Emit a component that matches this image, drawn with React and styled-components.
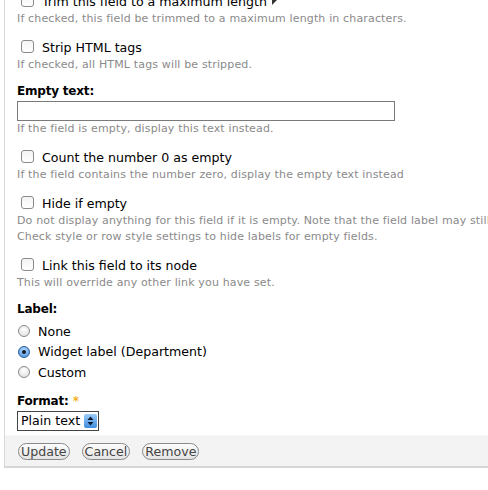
import styled, { createGlobalStyle, css } from "styled-components";

const GlobalStyle = createGlobalStyle`
  html, body {
    margin: 0;
    padding: 0;
    background: #fff;
    overflow: hidden;
  }
  body {
    font-family: "DejaVu Sans", Verdana, sans-serif;
    color: #000;
  }
`;

const Page = styled.div`
  width: 488px;
  height: 490px;
  overflow: hidden;
`;

const Panel = styled.div`
  margin: -9px 0 0 4px;
  border-left: 1px solid #d8d8d8;
  border-bottom: 2px solid #d4d6d6;
`;

const Body = styled.div`
  padding: 0 0 0 12px;
`;

const FormItem = styled.div`
  margin-bottom: 10px;
`;

const CheckRow = styled.label`
  display: flex;
  align-items: center;
  height: 20px;
  font-size: 12.6px;
  white-space: nowrap;
  padding-left: 4px;
`;

const Box = styled.span`
  width: 11px;
  height: 11px;
  border: 1px solid #8a8a8a;
  border-radius: 3px;
  background: linear-gradient(#f4f4f4, #ffffff);
  margin: -1px 8px 0 0;
  flex: none;
`;

const Arrow = styled.span`
  display: inline-block;
  width: 0;
  height: 0;
  border-top: 5px solid #333;
  border-right: 5px solid transparent;
  margin: 2px 0 0 5px;
`;

const Desc = styled.div`
  font-size: 11px;
  letter-spacing: 0.15px;
  line-height: 16px;
  color: #8a8a8a;
  white-space: nowrap;
`;

const FieldLabel = styled.div`
  font-size: 12px;
  letter-spacing: -0.2px;
  font-weight: bold;
  line-height: 16px;
  margin-top: ${(p) => p.top || 0}px;
  margin-bottom: ${(p) => p.gap || 0}px;
`;

const Required = styled.span`
  color: #f0b020;
  margin-left: 4px;
`;

const TextInput = styled.div`
  width: 376px;
  height: 18px;
  border: 1px solid #7a7a7a;
  background: #fff;
`;

const RadioRow = styled.label`
  display: flex;
  align-items: center;
  height: 20.5px;
  font-size: 12.6px;
`;

const Radio = styled.span`
  width: 10px;
  height: 10px;
  border-radius: 50%;
  border: 1px solid #8a8a8a;
  background: radial-gradient(circle at 50% 35%, #ffffff, #dcdcdc);
  margin: 0 8px 0 1px;
  flex: none;
  position: relative;
  ${(p) =>
    p.checked &&
    css`
      border-color: #2a5f9e;
      background: radial-gradient(circle at 50% 35%, #bfe0ff, #3b87d8);
      &::after {
        content: "";
        position: absolute;
        left: 3px;
        top: 3px;
        width: 4px;
        height: 4px;
        border-radius: 50%;
        background: #0c1a2c;
      }
    `};
`;

const Select = styled.div`
  display: flex;
  width: max-content;
  align-items: center;
  height: 18px;
  border: 1px solid #444;
  font-size: 12.6px;
  padding-left: 3px;
  background: #fff;
`;

const Stepper = styled.span`
  width: 13px;
  height: 14px;
  margin: 0 1px 0 4px;
  border-radius: 2px;
  background: linear-gradient(#9ccaf6, #3f8ee0);
  display: flex;
  align-items: center;
  justify-content: center;
`;

const ButtonBar = styled.div`
  margin-top: -6px;
  height: 28px;
  padding: 2px 0 0 13px;
  background: #f3f3f3;
  border-top: 1px solid #f8f8f8;
  display: flex;
  align-items: center;
  gap: 12px;
`;

const Button = styled.span`
  font-size: 12.6px;
  line-height: 15px;
  color: #444;
  border: 1px solid #888;
  border-radius: 9px;
  padding: 0 2px;
  background: linear-gradient(#fdfdfd, #e4e4e4);
`;

function Check({ children, arrow }) {
  return (
    <CheckRow>
      <Box />
      {children}
      {arrow && <Arrow />}
    </CheckRow>
  );
}

export default function App() {
  return (
    <Page>
      <GlobalStyle />
      <Panel>
        <Body>
          <FormItem>
            <Check arrow>Trim this field to a maximum length</Check>
            <Desc>If checked, this field be trimmed to a maximum length in characters.</Desc>
          </FormItem>
          <FormItem>
            <Check>Strip HTML tags</Check>
            <Desc>If checked, all HTML tags will be stripped.</Desc>
          </FormItem>
          <FormItem>
            <FieldLabel gap={2}>Empty text:</FieldLabel>
            <TextInput />
            <Desc>If the field is empty, display this text instead.</Desc>
          </FormItem>
          <FormItem>
            <Check>Count the number 0 as empty</Check>
            <Desc>If the field contains the number zero, display the empty text instead</Desc>
          </FormItem>
          <FormItem>
            <Check>Hide if empty</Check>
            <Desc>
              Do not display anything for this field if it is empty. Note that the field label may still be displayed.
              <br />
              Check style or row style settings to hide labels for empty fields.
            </Desc>
          </FormItem>
          <FormItem>
            <Check>Link this field to its node</Check>
            <Desc>This will override any other link you have set.</Desc>
          </FormItem>
          <FormItem>
            <FieldLabel top={1} gap={4}>Label:</FieldLabel>
            <RadioRow>
              <Radio />
              None
            </RadioRow>
            <RadioRow>
              <Radio checked />
              Widget label (Department)
            </RadioRow>
            <RadioRow>
              <Radio />
              Custom
            </RadioRow>
          </FormItem>
          <FormItem>
            <FieldLabel gap={2}>
              Format:<Required>*</Required>
            </FieldLabel>
            <Select>
              Plain text
              <Stepper>
                <svg width="7" height="10" viewBox="0 0 7 10">
                  <path d="M3.5 0.5 L6.5 4 L0.5 4 Z M0.5 6 L6.5 6 L3.5 9.5 Z" fill="#0a1a30" />
                </svg>
              </Stepper>
            </Select>
          </FormItem>
        </Body>
        <ButtonBar>
          <Button>Update</Button>
          <Button>Cancel</Button>
          <Button>Remove</Button>
        </ButtonBar>
      </Panel>
    </Page>
  );
}
